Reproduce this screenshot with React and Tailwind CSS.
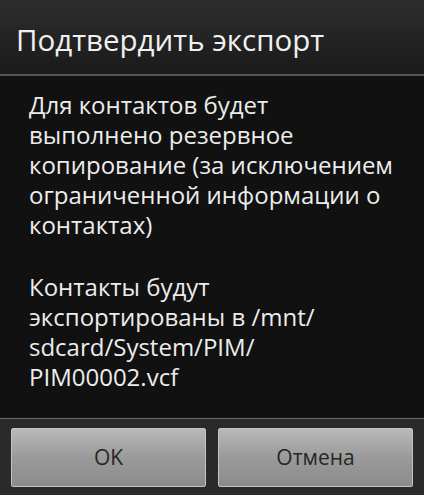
const App = () => {
  return (
    <div
      className="w-[424px] h-[495px] flex flex-col bg-[#111111] overflow-hidden"
      style={{ fontFamily: '"Open Sans", "Noto Sans", sans-serif' }}
    >
      {/* Title */}
      <div className="h-[74px] shrink-0 bg-gradient-to-b from-[#2e2e2e] to-[#1a1a1a] flex items-center pl-[16px] pt-[6px]">
        <h1 className="text-[29.5px] leading-none text-[#f0f0f0]">Подтвердить экспорт</h1>
      </div>
      <div className="h-[2px] shrink-0 bg-[#555555]" />

      {/* Message */}
      <div className="flex-1 pl-[29px] pt-[14px] text-[24px] leading-[30px] text-[#ececec] whitespace-nowrap">
        <p>
          Для контактов будет
          <br />
          выполнено резервное
          <br />
          копирование (за исключением
          <br />
          ограниченной информации о
          <br />
          контактах)
        </p>
        <p className="mt-[32px]">
          Контакты будут
          <br />
          экспортированы в /mnt/
          <br />
          sdcard/System/PIM/
          <br />
          PIM00002.vcf
        </p>
      </div>

      {/* Buttons */}
      <div className="h-[1px] shrink-0 bg-[#6a6a6a]" />
      <div className="h-[76px] shrink-0 bg-[#2a2a2a] flex gap-[12px] px-[11px] pt-[9px] pb-[8px]">
        <button className="flex-1 rounded-[2px] border border-[#c4c4c4] bg-gradient-to-b from-[#b9b9b9] via-[#9a9a9a] to-[#8c8c8c] text-[21px] text-[#262626]">
          OK
        </button>
        <button className="flex-1 rounded-[2px] border border-[#c4c4c4] bg-gradient-to-b from-[#b9b9b9] via-[#9a9a9a] to-[#8c8c8c] text-[21px] text-[#262626]">
          Отмена
        </button>
      </div>
    </div>
  );
};

export default App;
